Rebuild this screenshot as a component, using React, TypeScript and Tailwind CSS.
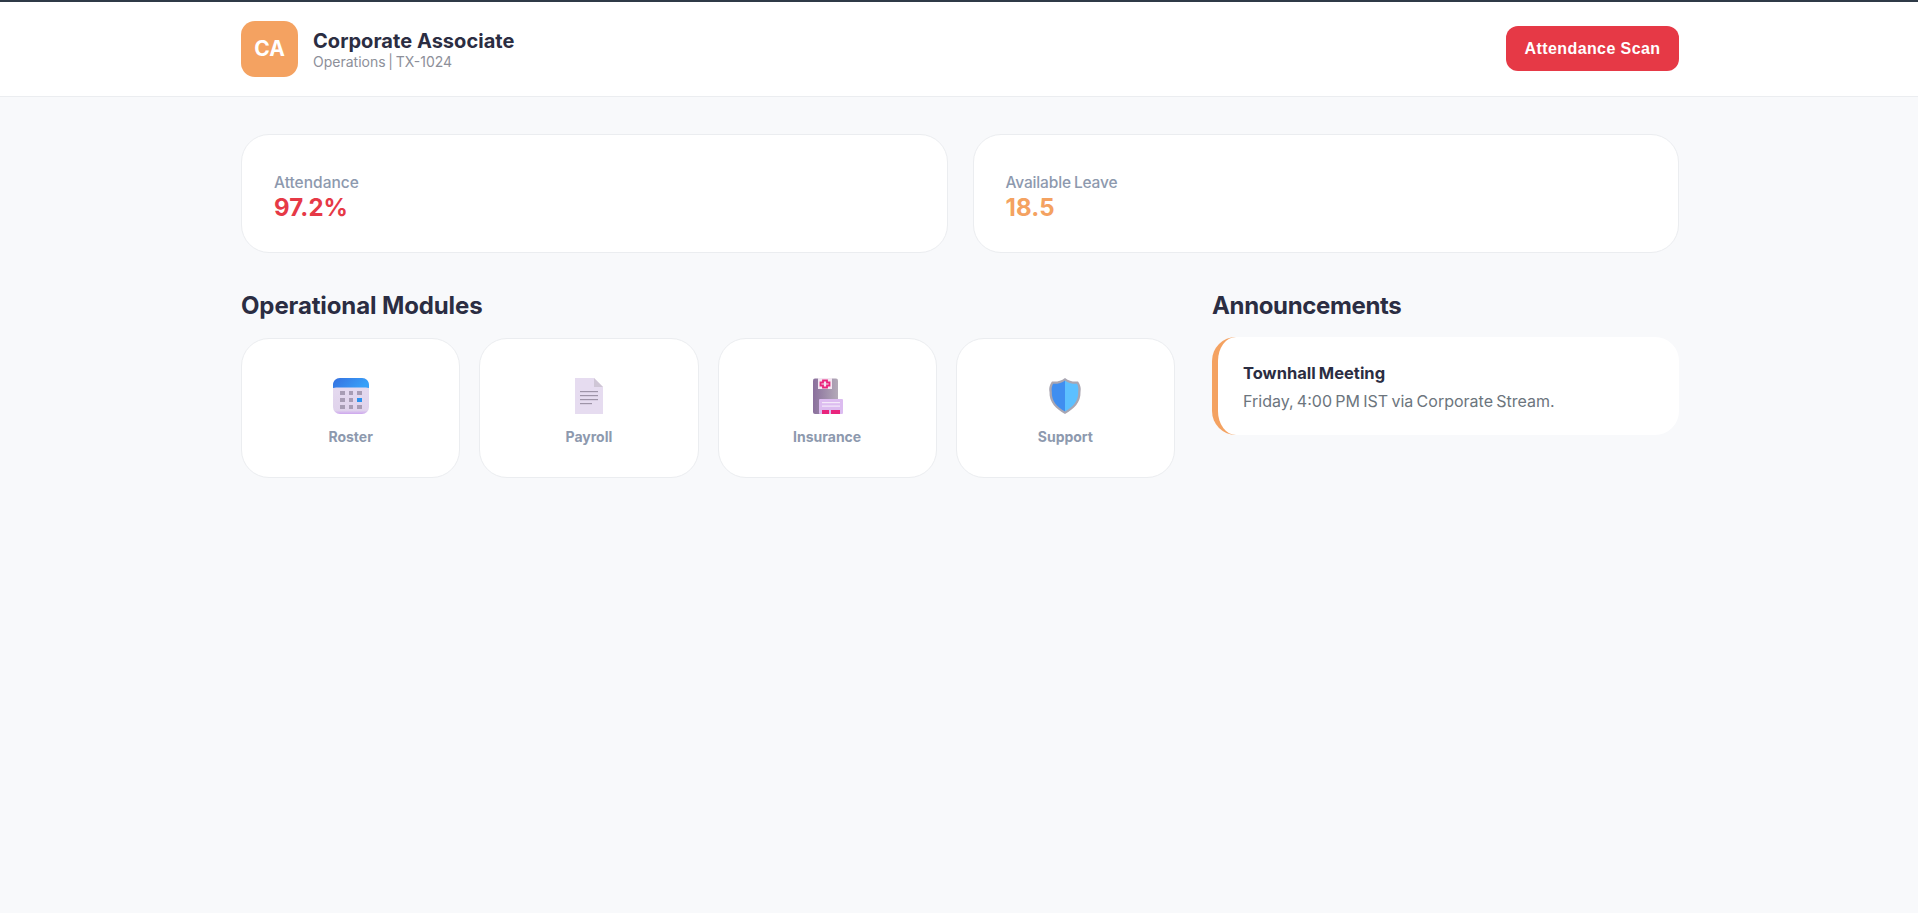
const font = { fontFamily: 'Inter, "Noto Sans", sans-serif' }

function RosterIcon() {
  return (
    <svg viewBox="0 0 36 36" className="w-9 h-9">
      <defs>
        <linearGradient id="calTop" x1="0" y1="0" x2="1" y2="0.3">
          <stop offset="0" stopColor="#3570e0" />
          <stop offset="1" stopColor="#38a0f8" />
        </linearGradient>
        <linearGradient id="calBody" x1="0" y1="0" x2="0" y2="1">
          <stop offset="0" stopColor="#e6dcf0" />
          <stop offset="0.9" stopColor="#e0d3ec" />
          <stop offset="1" stopColor="#cda6ee" />
        </linearGradient>
      </defs>
      <rect x="0" y="0" width="36" height="36" rx="7" fill="url(#calBody)" />
      <path d="M0 10 V7 C0 3 3 0 7 0 H29 C33 0 36 3 36 7 V10 C33 9.400 33 9.400 30 9.400 H6 C3 9.400 3 9.400 0 10 Z" fill="url(#calTop)" />
      {[7, 14, 21].map(y => (
        <g key={y}>
          <rect x="7" y={y + 6} width="5" height="4" fill="#a79cb4" />
          <rect x="16" y={y + 6} width="4" height="4" fill="#a79cb4" />
          <rect x="24" y={y + 6} width="5" height="4" fill={y === 14 ? '#2a92ee' : '#a79cb4'} />
        </g>
      ))}
    </svg>
  )
}

function PayrollIcon() {
  return (
    <svg viewBox="0 0 36 36" className="w-9 h-9">
      <path d="M4 0 H23 L32 9 V36 H4 Z" fill="#e6dcf0" />
      <path d="M23 0 L32 9 H23 Z" fill="#cfc6d6" />
      <rect x="9" y="13" width="18" height="1.200" fill="#9e94a8" />
      <rect x="9" y="17" width="18" height="1.200" fill="#9e94a8" />
      <rect x="9" y="21" width="18" height="1.200" fill="#9e94a8" />
      <rect x="9" y="25" width="12" height="1.200" fill="#9e94a8" />
    </svg>
  )
}

function InsuranceIcon() {
  return (
    <svg viewBox="0 0 36 36" className="w-9 h-9">
      <defs>
        <linearGradient id="insBody" x1="0" y1="0" x2="1" y2="0">
          <stop offset="0" stopColor="#8a6f9c" />
          <stop offset="1" stopColor="#b3aab8" />
        </linearGradient>
      </defs>
      <rect x="4" y="0.500" width="25" height="35.500" rx="2" fill="url(#insBody)" />
      <rect x="9" y="0" width="14" height="11" fill="#f3e6f2" />
      <path d="M14 2.500 H18 V4.500 H20.500 V7.500 H18 V9.500 H14 V7.500 H11.500 V4.500 H14 Z" fill="none" stroke="#e9247c" strokeWidth="1.800" />
      <rect x="10" y="21" width="24" height="15" rx="1" fill="#dcbcf0" />
      <rect x="13" y="24" width="18" height="1.200" fill="#f4eaf9" />
      <rect x="13" y="27.500" width="18" height="1.200" fill="#f4eaf9" />
      <rect x="13" y="32" width="7" height="4" fill="#e9247c" />
      <rect x="22" y="32" width="9" height="4" fill="#e9247c" />
    </svg>
  )
}

function SupportIcon() {
  return (
    <svg viewBox="0 0 36 36" className="w-9 h-9">
      <path d="M18 0 C22 3 26 4 31 3.500 C34 8 34 11 33.500 14 C34 24 27 31 18 36 C9 31 2 24 2.500 14 C2 11 2 8 5 3.500 C10 4 14 3 18 0 Z" fill="#a9a6b2" />
      <path d="M18 2.500 V33.500 C10 29 4.500 23 4.800 14 C4.500 11 4.500 9 6 5.800 C11 6 15 5 18 2.500 Z" fill="#3f8ef0" />
      <path d="M18 2.500 V33.500 C26 29 31.500 23 31.200 14 C31.500 11 31.500 9 30 5.800 C25 6 21 5 18 2.500 Z" fill="#5cc0ff" />
    </svg>
  )
}

const modules = [
  { label: 'Roster', icon: <RosterIcon /> },
  { label: 'Payroll', icon: <PayrollIcon /> },
  { label: 'Insurance', icon: <InsuranceIcon /> },
  { label: 'Support', icon: <SupportIcon /> },
]

export default function App() {
  return (
    <div className="min-h-[913px] bg-[#f8f9fb]" style={font}>
      {/* Top bar */}
      <header className="bg-white border-t-2 border-t-[#2f3a47] border-b border-b-[#ebedf0] h-[97px]">
        <div className="ml-[241px] w-[1438px] h-full flex items-center justify-between">
          <div className="flex items-center gap-[15px]">
            <div className="w-[57px] h-[56px] rounded-[14px] bg-[#f4a261] text-white font-bold text-[21px] flex items-center justify-center">
              CA
            </div>
            <div>
              <div className="text-[20px] leading-[24px] font-bold text-[#2b2d42] tracking-[0.04px]">Corporate Associate</div>
              <div className="text-[14px] leading-[17px] text-[#8d8f99] [word-spacing:-1.200px]">Operations | TX-1024</div>
            </div>
          </div>
          <button
            className="w-[173px] h-[45px] rounded-[12px] bg-[#e63946] text-white font-bold text-[16px] tracking-[0.4px] -mt-[1px]"
            style={{ fontFamily: '"Liberation Sans", Arial, sans-serif' }}
          >
            Attendance Scan
          </button>
        </div>
      </header>

      <main className="ml-[241px] w-[1438px] pt-[37px]">
        {/* Stats */}
        <div className="grid grid-cols-2 gap-[25px]">
          <div className="bg-white border border-[#ebedf0] rounded-[28px] h-[119px] px-[32px] pt-[38px]">
            <p className="text-[15.500px] leading-[20px] text-[#8d99ae] font-medium">Attendance</p>
            <p className="text-[24px] leading-[29px] font-bold text-[#e63946] tracking-[0.1px]">97.2%</p>
          </div>
          <div className="bg-white border border-[#ebedf0] rounded-[28px] h-[119px] px-[32px] pt-[38px]">
            <p className="text-[15.500px] leading-[20px] text-[#8d99ae] font-medium [word-spacing:-1px] tracking-[-0.15px]">Available Leave</p>
            <p className="text-[24px] leading-[29px] font-bold text-[#f4a261] tracking-[0.1px]">18.5</p>
          </div>
        </div>

        <div className="grid grid-cols-[934px_467px] gap-[37px] mt-[38px]">
          {/* Modules */}
          <section>
            <h2 className="text-[24px] leading-[30px] font-bold text-[#2b2d42] mb-[17px] tracking-[-0.120px]">Operational Modules</h2>
            <div className="grid grid-cols-4 gap-[19px]">
              {modules.map(m => (
                <div
                  key={m.label}
                  className="bg-white border border-[#ebedf0] rounded-[28px] h-[140px] flex flex-col items-center pt-[39px]"
                >
                  {m.icon}
                  <span className="mt-[14px] text-[14px] leading-[18px] font-bold text-[#8d99ae]">{m.label}</span>
                </div>
              ))}
            </div>
          </section>

          {/* Announcements */}
          <section>
            <h2 className="text-[24px] leading-[30px] font-bold text-[#2b2d42] mb-[16px] tracking-[-0.350px]">Announcements</h2>
            <div className="bg-white border-l-[6px] border-[#f4a261] rounded-[24px] h-[98px] pl-[25px] flex flex-col justify-center">
              <p className="text-[16.500px] leading-[24px] font-bold text-[#2b2d42] [word-spacing:-0.800px]">Townhall Meeting</p>
              <p className="mt-[5px] text-[16px] leading-[22px] text-[#6c757d] [word-spacing:-1.200px]">Friday, 4:00 PM IST via Corporate Stream.</p>
            </div>
          </section>
        </div>
      </main>
    </div>
  )
}
